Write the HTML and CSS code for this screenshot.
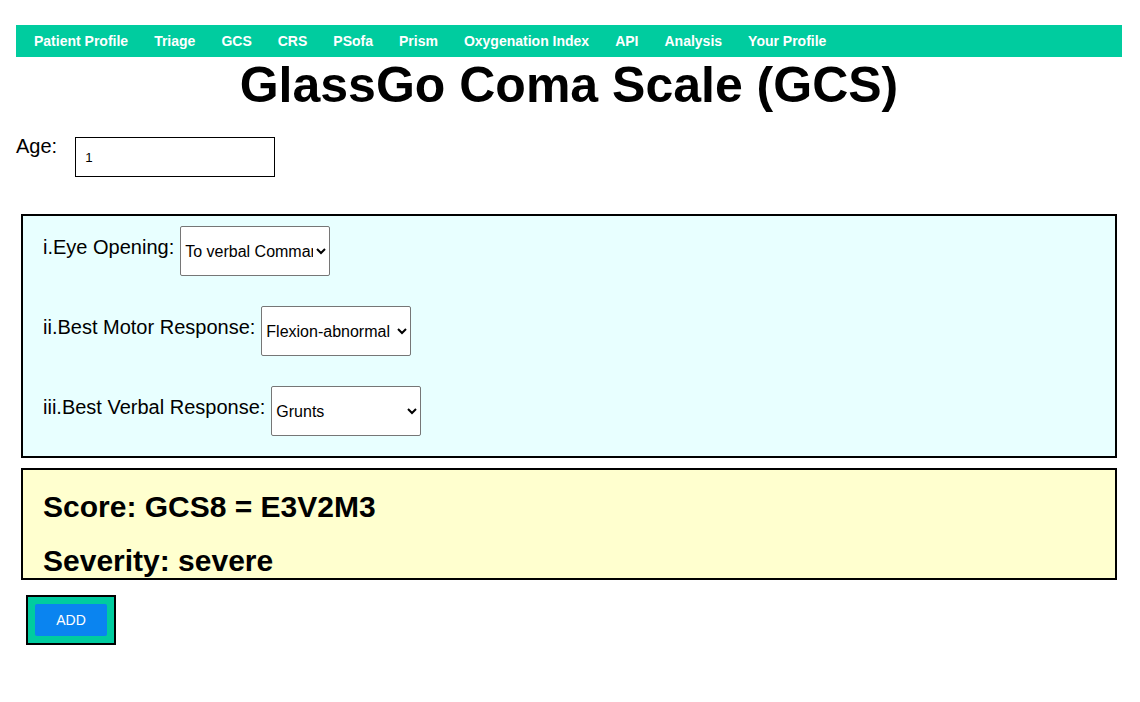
FILE: index.html
```html
<!DOCTYPE html>
<html>
<head>
<meta charset="utf-8">
<title>GlassGo Coma Scale (GCS)</title>
<link rel="stylesheet" href="styles.css">
</head>
<body>
<div class="page">
  <nav class="nav">
    <a href="#">Patient Profile</a>
    <a href="#">Triage</a>
    <a href="#">GCS</a>
    <a href="#">CRS</a>
    <a href="#">PSofa</a>
    <a href="#">Prism</a>
    <a href="#">Oxygenation Index</a>
    <a href="#">API</a>
    <a href="#">Analysis</a>
    <a href="#">Your Profile</a>
  </nav>
  <h1 class="title">GlassGo Coma Scale (GCS)</h1>
  <div class="age-row">
    <label class="age-label" for="age">Age:</label>
    <input class="age-input" id="age" type="text" value="1">
  </div>
  <div class="gcs-box">
    <div class="field">
      <label>i.Eye Opening:</label>
      <select class="sel">
        <option>Spontaneous</option>
        <option selected>To verbal Command</option>
        <option>To pain</option>
        <option>None</option>
      </select>
    </div>
    <div class="field">
      <label>ii.Best Motor Response:</label>
      <select class="sel">
        <option>Obeys</option>
        <option>Localizes pain</option>
        <option>Withdraws</option>
        <option selected>Flexion-abnormal</option>
        <option>Extension</option>
        <option>None</option>
      </select>
    </div>
    <div class="field">
      <label>iii.Best Verbal Response:</label>
      <select class="sel">
        <option>Oriented</option>
        <option>Confused</option>
        <option>Inappropriate</option>
        <option selected>Grunts</option>
        <option>None</option>
      </select>
    </div>
  </div>
  <div class="result-box">
    <h2 class="result-line">Score: GCS8 = E3V2M3</h2>
    <h2 class="result-line">Severity: severe</h2>
  </div>
  <div class="add-wrap">
    <button class="add-btn" type="button">ADD</button>
  </div>
</div>
</body>
</html>
```
FILE: styles.css
```css
html, body {
  margin: 0;
  padding: 0;
  background: #ffffff;
}

body {
  font-family: "Liberation Sans", Arial, sans-serif;
  color: #000;
}

.page {
  padding: 25px 18px 0 16px;
}

.nav {
  display: flex;
  align-items: center;
  gap: 26px;
  height: 32px;
  padding-left: 18px;
  background: #00cc9f;
}

.nav a {
  color: #ffffff;
  font-weight: bold;
  font-size: 14px;
  text-decoration: none;
  line-height: 16px;
}

.title {
  margin: 0;
  text-align: center;
  font-size: 50px;
  font-weight: bold;
  line-height: 57px;
}

.age-row {
  display: flex;
  align-items: flex-start;
  gap: 18px;
  margin-top: 21px;
}

.age-label {
  font-size: 20px;
  line-height: 23px;
}

.age-input {
  box-sizing: border-box;
  width: 200px;
  height: 40px;
  margin-top: 2px;
  border: 1px solid #000;
  padding: 0 9px;
  font-family: "Liberation Sans", Arial, sans-serif;
  font-size: 13.33px;
  color: #000;
  background: #fff;
  outline: none;
}

.gcs-box {
  margin: 37px 5px 0 5px;
  border: 2px solid #000;
  background: #e8ffff;
  padding: 10px 20px 20px 20px;
  display: flex;
  flex-direction: column;
  gap: 30px;
}

.field {
  display: flex;
  align-items: flex-start;
  gap: 6px;
}

.field label {
  font-size: 20px;
  line-height: 23px;
  margin-top: 10px;
}

.sel {
  box-sizing: border-box;
  width: 150px;
  height: 50px;
  font-family: "Liberation Sans", Arial, sans-serif;
  font-size: 16px;
  color: #000;
  background: #fff;
  border: 1px solid #767676;
  border-radius: 2px;
}

.result-box {
  margin: 10px 5px 0 5px;
  border: 2px solid #000;
  background: #ffffcf;
  padding: 19px 20px 0 20px;
  display: flex;
  flex-direction: column;
  gap: 19px;
}

.result-line {
  margin: 0;
  font-size: 30px;
  line-height: 35px;
  font-weight: bold;
}

.add-wrap {
  display: inline-block;
  margin: 15px 0 0 10px;
  border: 2px solid #000;
  background: #00cc9f;
  padding: 7px;
}

.add-btn {
  display: block;
  width: 72px;
  height: 32px;
  border: none;
  border-radius: 2px;
  background: #0a84f0;
  color: #fff;
  font-family: "Liberation Sans", Arial, sans-serif;
  font-size: 14px;
  padding: 0;
}
```
